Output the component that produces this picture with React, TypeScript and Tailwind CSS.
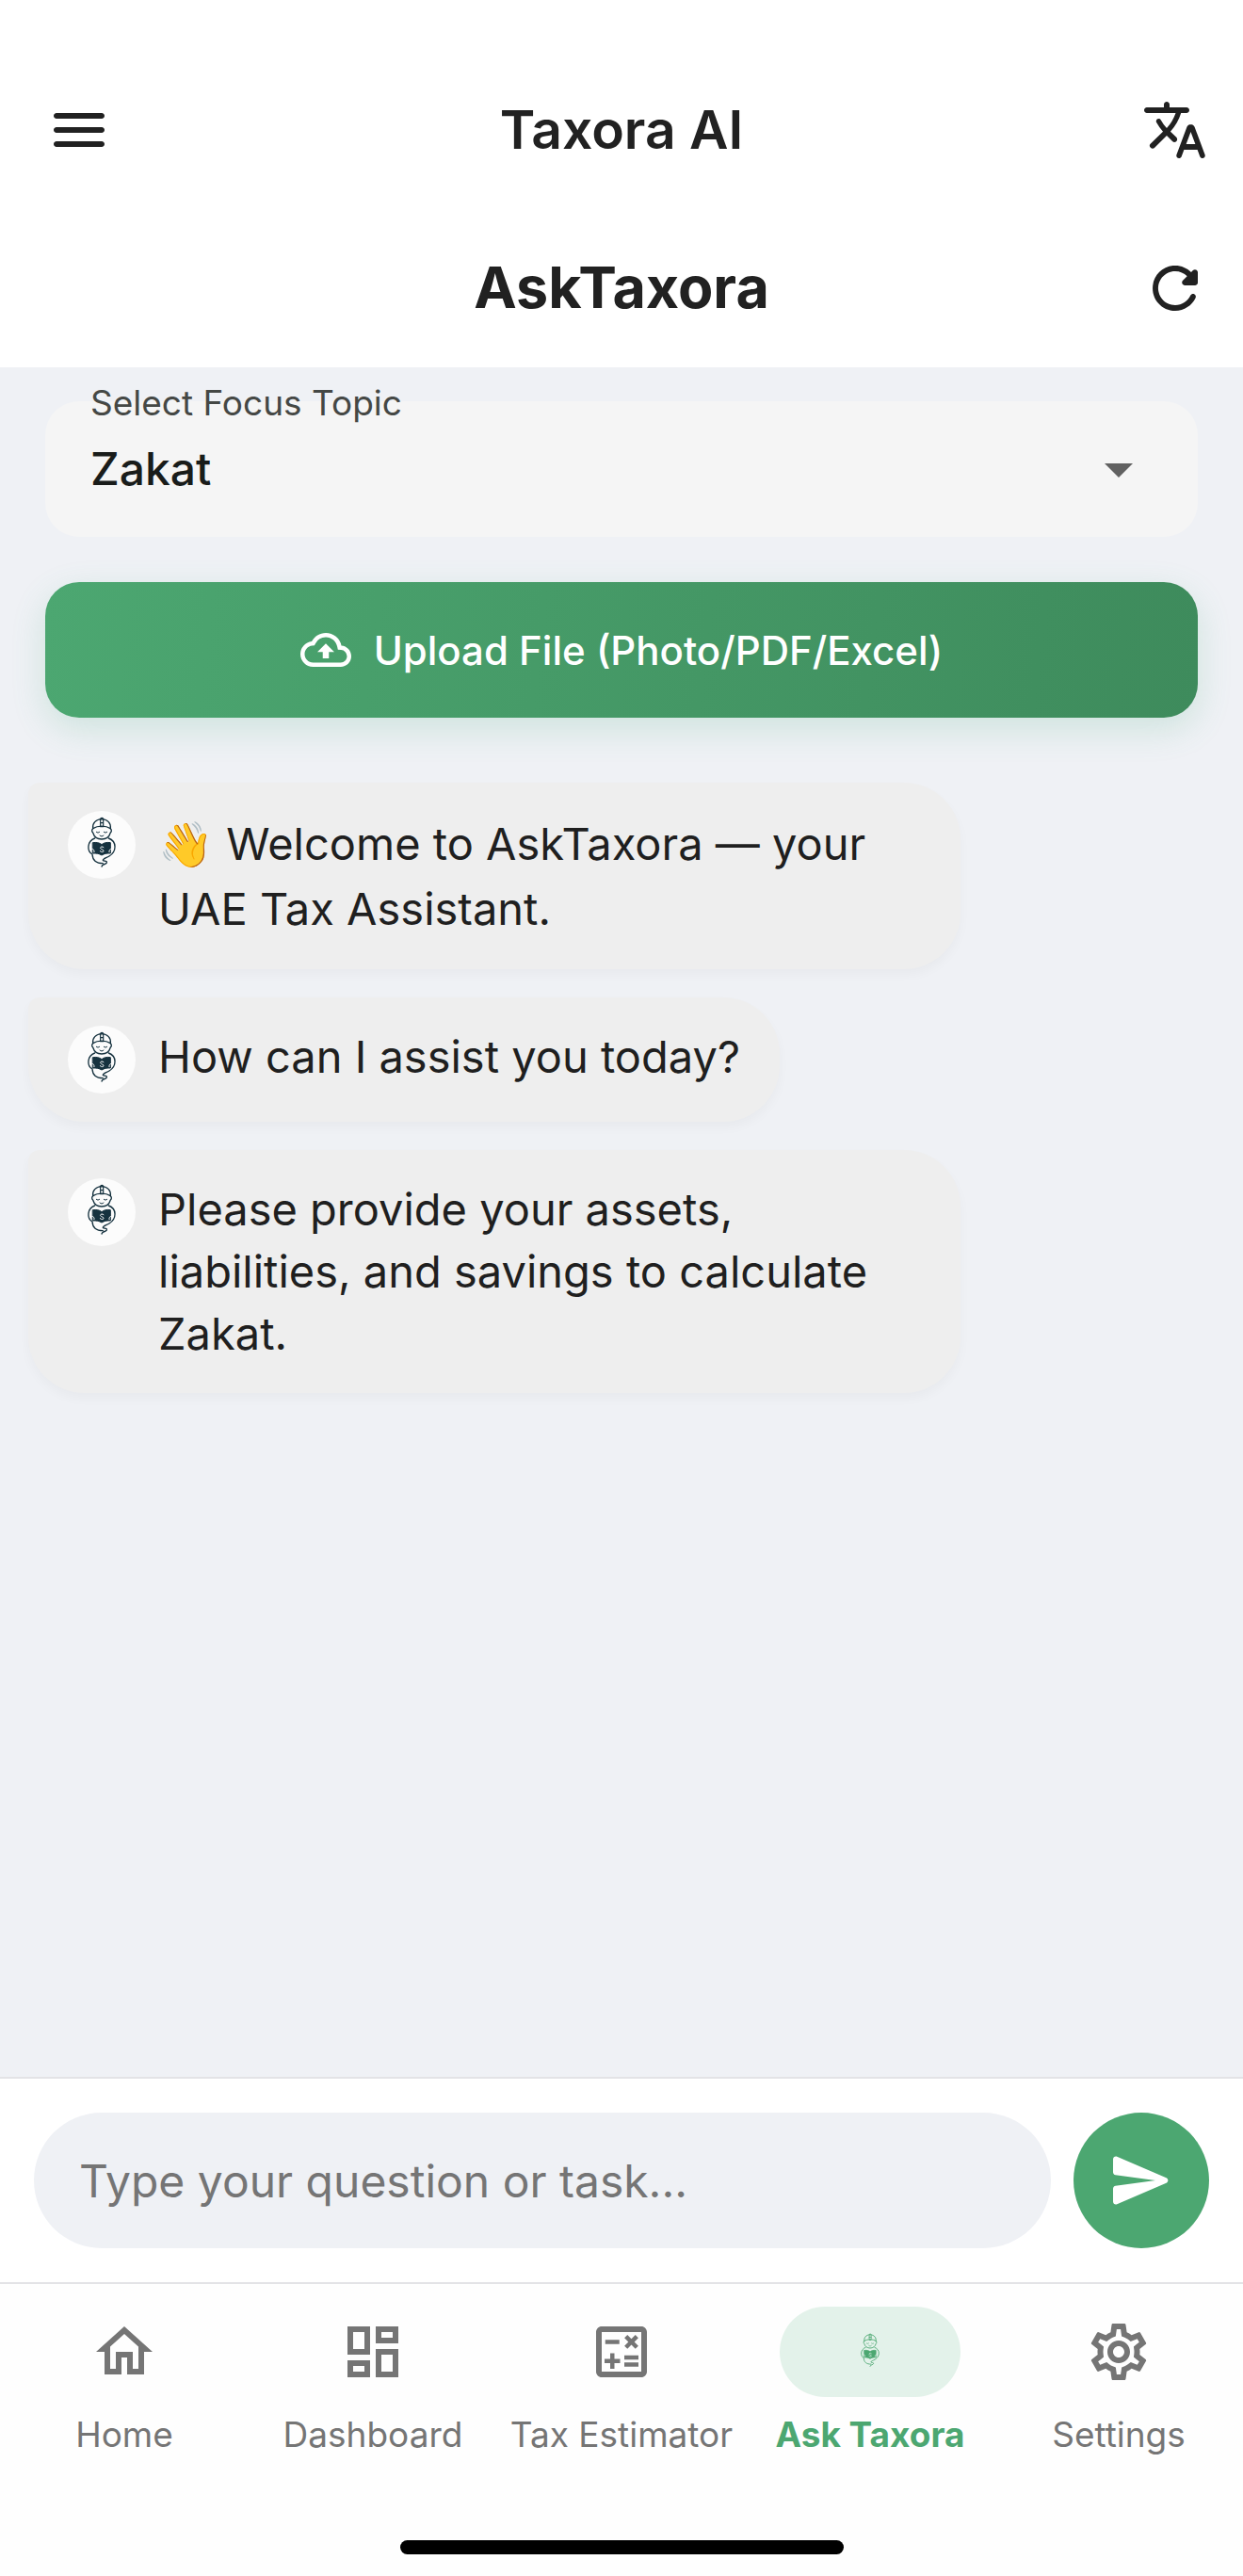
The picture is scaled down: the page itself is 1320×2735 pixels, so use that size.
import { useState } from 'react';
import type { ReactNode } from 'react';
import {
  MdArrowDropDown,
  MdOutlineCalculate,
  MdOutlineCloudUpload,
  MdOutlineDashboard,
  MdOutlineHome,
  MdOutlineSettings,
} from 'react-icons/md';

function RoundedIcon({ d }: { d: string }) {
  return (
    <svg viewBox="0 0 24 24" className="size-[72px]" fill="currentColor" aria-hidden="true">
      <path d={d} />
    </svg>
  );
}

const MENU =
  'M4 18h16c.55 0 1-.45 1-1s-.45-1-1-1H4c-.55 0-1 .45-1 1s.45 1 1 1zm0-5h16c.55 0 1-.45 1-1s-.45-1-1-1H4c-.55 0-1 .45-1 1s.45 1 1 1zM3 7c0 .55.45 1 1 1h16c.55 0 1-.45 1-1s-.45-1-1-1H4c-.55 0-1 .45-1 1z';
const TRANSLATE =
  'M12.65 15.67c.14-.36.05-.77-.23-1.05l-2.09-2.06.03-.03c1.74-1.94 2.98-4.17 3.71-6.53h1.94c.54 0 .99-.45.99-.99v-.02c0-.54-.45-.99-.99-.99H10V3c0-.55-.45-1-1-1s-1 .45-1 1v1H1.99c-.54 0-.99.45-.99.99 0 .55.45.99.99.99h10.18A15.66 15.66 0 0 1 9 11.35c-.81-.89-1.49-1.86-2.06-2.88A.885.885 0 0 0 6.16 8c-.69 0-1.13.75-.79 1.35.63 1.13 1.4 2.21 2.3 3.21L3.3 16.87a.99.99 0 0 0 0 1.42c.39.39 1.02.39 1.42 0L9 14l2.02 2.02c.51.51 1.38.32 1.63-.35zM17.5 10c-.6 0-1.14.37-1.35.94l-3.67 9.8c-.24.61.22 1.26.87 1.26.39 0 .74-.24.88-.61l.89-2.39h4.75l.9 2.39c.14.36.49.61.88.61.65 0 1.11-.65.88-1.26l-3.67-9.8c-.22-.57-.76-.94-1.36-.94zm-1.62 7l1.62-4.33L19.12 17h-3.24z';
const REFRESH =
  'M17.65 6.35c-1.63-1.63-3.94-2.57-6.48-2.31-3.67.37-6.69 3.35-7.1 7.02C3.52 15.91 7.27 20 12 20c3.19 0 5.93-1.87 7.21-4.56.32-.67-.16-1.44-.9-1.44-.37 0-.72.2-.88.53-1.13 2.43-3.84 3.97-6.8 3.31-2.22-.49-4.01-2.3-4.48-4.52C5.31 9.44 8.26 6 12 6c1.66 0 3.14.69 4.22 1.78l-1.51 1.51c-.63.63-.19 1.71.7 1.71H19c.55 0 1-.45 1-1V6.41c0-.89-1.08-1.34-1.71-.71l-.64.65z';
const SEND =
  'M3.4 20.4l17.45-7.48c.81-.35.81-1.49 0-1.84L3.4 3.6c-.66-.29-1.39.2-1.39.91L2 9.12c0 .5.37.93.87.99L17 12 2.87 13.88c-.5.07-.87.5-.87 1l.01 4.61c0 .71.73 1.2 1.39.91z';

/* Genie in a cap reading a ledger. */
function Mascot({ className, page }: { className: string; page: string }) {
  return (
    <svg
      viewBox="0 0 216 216"
      className={className}
      fill="none"
      stroke="currentColor"
      strokeWidth="4"
      strokeLinecap="round"
      strokeLinejoin="round"
      aria-hidden="true"
    >
      <path d="M80 56c-2-17 9-29 28-30 19 1 30 13 28 30" />
      <path d="M80 56c16-10 40-10 56 0" />
      <path d="M104 50V26c0-5 9-5 9 0v24zM104 38h9" strokeWidth="3.5" />
      <path d="M80 56c-4 4-4 10 0 13 4 14 14 21 28 21s24-7 28-21c4-3 4-9 0-13" />
      <path d="M91 67c3 3 7 3 10 0M115 67c3 3 7 3 10 0M102 78c4 4 8 4 12 0" strokeWidth="3" />
      <path d="M86 87C61 96 60 128 78 138c1 20 12 29 34 29M130 87c27 10 26 42 2 57-10 6-20 8-20 13 2 4 14 1 12 8-2 6-14 3-16 12" />
      <path
        d="M80 101c11-2 21 0 28 6 7-6 17-8 28-6v34c-11-1-20 1-28 6-8-5-17-7-28-6z"
        fill="currentColor"
        strokeWidth="3"
      />
      <path d="M114 116c-5-5-11-1-10 3 2 4 10 4 10 8 0 5-7 5-11 1" stroke={page} strokeWidth="3" />
      <path d="M77 121c5 0 8 4 7 10M139 121c-5 0-8 4-7 10" stroke={page} strokeWidth="3" />
    </svg>
  );
}

function Message({ children, tall = false }: { children: ReactNode; tall?: boolean }) {
  return (
    <li className="mx-[30px] flex max-w-[75%] items-start gap-6 rounded-[60px] rounded-tl-xl bg-[#eeeeee] px-[42px] py-[30px] shadow-[0_6px_12px_rgba(0,0,0,0.03)]">
      <span className="flex size-[72px] shrink-0 items-center justify-center rounded-full bg-[#fcfcfc] text-[#16323f]">
        <Mascot className="size-[72px]" page="#fcfcfc" />
      </span>
      <p
        className={
          tall ? 'text-[47px] leading-[69px] text-[#1f1f1f]' : 'text-[47px] leading-[66px] text-[#1f1f1f]'
        }
      >
        {children}
      </p>
    </li>
  );
}

function NavItem({ icon, label, active = false }: { icon: ReactNode; label: string; active?: boolean }) {
  return (
    <a
      href={'#' + label.toLowerCase().replace(' ', '-')}
      aria-current={active ? 'page' : undefined}
      className={
        active
          ? 'flex flex-1 flex-col items-center gap-4 font-bold text-[#4ca771]'
          : 'flex flex-1 flex-col items-center gap-4 text-[#757575]'
      }
    >
      <span
        className={
          active
            ? 'flex h-24 w-48 items-center justify-center rounded-full bg-[#e3f2ea]'
            : 'flex h-24 w-48 items-center justify-center'
        }
      >
        {icon}
      </span>
      <span className="text-[37px] leading-[48px] whitespace-nowrap">{label}</span>
    </a>
  );
}

export default function App() {
  const [topic, setTopic] = useState('Zakat');
  const [draft, setDraft] = useState('');

  return (
    <div className="flex min-h-screen flex-col bg-[#eff1f5] font-['Inter',sans-serif] text-[#212121]">
      <header className="bg-white pt-[54px]">
        <div className="grid h-[168px] grid-cols-[1fr_auto_1fr] items-center px-9">
          <button type="button" aria-label="Open menu" className="ml-3 justify-self-start">
            <RoundedIcon d={MENU} />
          </button>
          <p className="text-[57px] font-semibold">Taxora AI</p>
          <button type="button" aria-label="Change language" className="justify-self-end">
            <RoundedIcon d={TRANSLATE} />
          </button>
        </div>
        <div className="grid h-[168px] grid-cols-[1fr_auto_1fr] items-center px-9">
          <h1 className="col-start-2 text-[61px] font-bold">AskTaxora</h1>
          <button type="button" aria-label="Restart chat" className="justify-self-end">
            <RoundedIcon d={REFRESH} />
          </button>
        </div>
      </header>

      <main className="flex flex-1 flex-col">
        <div className="flex flex-col gap-12 px-12 pt-9">
          <div className="relative">
            <label
              htmlFor="topic"
              className="absolute -top-[22px] left-12 text-[37px] leading-[48px] text-[#454845]"
            >
              Select Focus Topic
            </label>
            <select
              id="topic"
              value={topic}
              onChange={(e) => setTopic(e.target.value)}
              className="h-36 w-full appearance-none rounded-[36px] bg-[#f5f5f5] px-12 text-[48px] font-medium text-[#191c1a]"
            >
              <option>Zakat</option>
              <option>VAT</option>
              <option>Corporate Tax</option>
            </select>
            <MdArrowDropDown className="pointer-events-none absolute top-9 right-12 size-[72px] text-[#616161]" />
          </div>
          <button
            type="button"
            className="flex h-36 items-center justify-center gap-6 rounded-[36px] bg-linear-[97deg] from-[#4ca771] to-[#3e8b5c] text-[42px] font-medium text-white shadow-[0_12px_36px_rgba(76,175,130,0.2)]"
          >
            <MdOutlineCloudUpload className="size-[54px]" />
            Upload File (Photo/PDF/Excel)
          </button>
        </div>

        <ul className="mt-[69px] flex flex-col items-start gap-[30px]">
          <Message tall>👋 Welcome to AskTaxora — your UAE Tax Assistant.</Message>
          <Message>How can I assist you today?</Message>
          <Message>Please provide your assets, liabilities, and savings to calculate Zakat.</Message>
        </ul>
      </main>

      <form
        onSubmit={(e) => e.preventDefault()}
        className="flex items-center gap-6 border-t-2 border-[#e3e3e6] bg-white p-9"
      >
        <input
          type="text"
          aria-label="Question or task"
          value={draft}
          onChange={(e) => setDraft(e.target.value)}
          placeholder="Type your question or task..."
          className="h-36 min-w-0 flex-1 rounded-full bg-[#eff1f5] px-12 text-[48px] placeholder:text-[#757575]"
        />
        <button
          type="submit"
          aria-label="Send"
          className="flex size-36 shrink-0 items-center justify-center rounded-full bg-[#4ca771] text-white"
        >
          <RoundedIcon d={SEND} />
        </button>
      </form>

      <footer className="flex flex-col items-center border-t-2 border-[#e3e3e6] bg-[#fefefe] pt-6 pb-[23px]">
        <nav aria-label="Main" className="flex w-full">
          <NavItem label="Home" icon={<MdOutlineHome className="size-[72px]" />} />
          <NavItem label="Dashboard" icon={<MdOutlineDashboard className="size-[72px]" />} />
          <NavItem label="Tax Estimator" icon={<MdOutlineCalculate className="size-[72px]" />} />
          <NavItem label="Ask Taxora" active icon={<Mascot className="size-12" page="#e3f2ea" />} />
          <NavItem label="Settings" icon={<MdOutlineSettings className="size-[72px]" />} />
        </nav>
        <div className="mt-[88px] h-[15px] w-[471px] rounded-full bg-black" />
      </footer>
    </div>
  );
}
